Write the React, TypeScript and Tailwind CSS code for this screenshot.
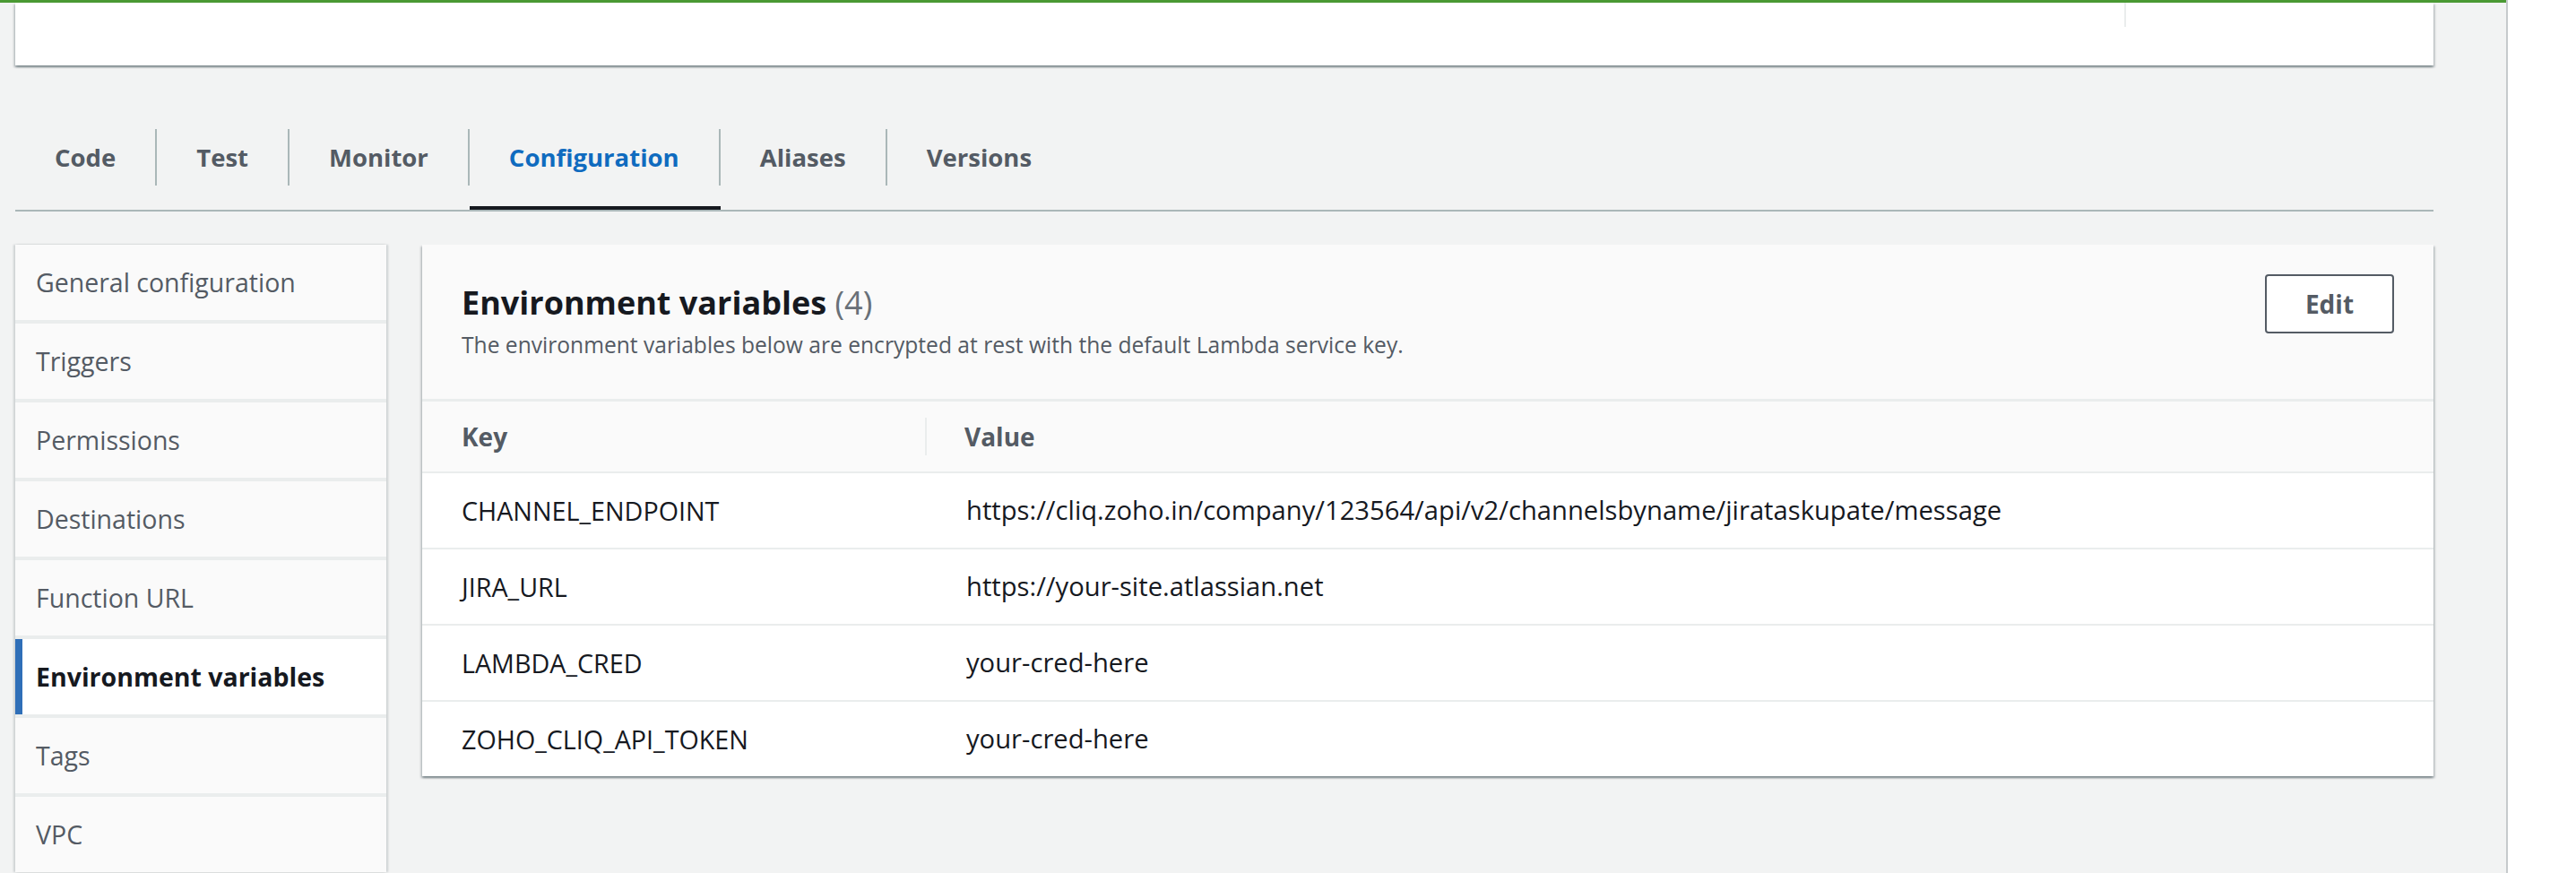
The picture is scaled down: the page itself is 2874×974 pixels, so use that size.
const tabs = ['Code', 'Test', 'Monitor', 'Configuration', 'Aliases', 'Versions'];

const navItems = [
  'General configuration',
  'Triggers',
  'Permissions',
  'Destinations',
  'Function URL',
  'Environment variables',
  'Tags',
  'VPC',
];

const envVars = [
  { key: 'CHANNEL_ENDPOINT', value: 'https://cliq.zoho.in/company/123564/api/v2/channelsbyname/jirataskupate/message' },
  { key: 'JIRA_URL', value: 'https://your-site.atlassian.net' },
  { key: 'LAMBDA_CRED', value: 'your-cred-here' },
  { key: 'ZOHO_CLIQ_API_TOKEN', value: 'your-cred-here' },
];

const cardShadow =
  'shadow-[0_2px_2px_0_rgba(0,28,36,0.3),2px_2px_2px_0_rgba(0,28,36,0.15),-2px_2px_2px_0_rgba(0,28,36,0.15)]';

export default function App() {
  const activeTab = 'Configuration';
  const activeNav = 'Environment variables';

  return (
    <div className="flex h-[974px] w-[2874px] overflow-hidden bg-white font-['Open_Sans',sans-serif]">
      <div className="flex w-[2798px] shrink-0 flex-col border-r-2 border-[#c6cacc] bg-[#f2f3f3]">
        {/* green status strip */}
        <div className="h-[3px] bg-[#4a9933]" />

        <div className="pl-[17px] pr-[81px]">
          {/* Top card (cut off) */}
          <div className={`flex h-[70px] bg-white ${cardShadow}`}>
            <div className="w-[2353px]" />
            <div className="h-[27px] w-[2px] bg-[#eaeded]" />
          </div>

          {/* Tabs */}
          <div className="mt-[71px] flex border-b-2 border-[#aab7b8]">
            {tabs.map((tab, i) => (
              <div key={tab} className="flex flex-col">
                <div
                  className={`flex h-[63px] items-center px-[44px] text-[27.5px] font-bold ${
                    i < tabs.length - 1 ? 'border-r-2 border-[#aab7b8]' : ''
                  } ${tab === activeTab ? 'text-[#0f6bbf]' : 'text-[#545b64]'}`}
                >
                  {tab}
                </div>
                <div className={`mt-[23px] h-[4px] ${tab === activeTab ? 'bg-[#16191f]' : ''}`} />
              </div>
            ))}
          </div>

          {/* Body */}
          <div className="mt-[37px] flex gap-[40px]">
            {/* Side nav */}
            <div className="flex w-[414px] shrink-0 flex-col gap-[4px] bg-[#eaeded] shadow-[2px_0_2px_0_rgba(0,28,36,0.15),-2px_0_2px_0_rgba(0,28,36,0.15)]">
              {navItems.map((item) =>
                item === activeNav ? (
                  <div
                    key={item}
                    className="flex h-[84px] shrink-0 items-center border-l-[8px] border-[#2f6fb8] bg-white pl-[15px] text-[28.5px] font-bold text-[#16191f]"
                  >
                    {item}
                  </div>
                ) : (
                  <div
                    key={item}
                    className="flex h-[84px] shrink-0 items-center bg-[#fafafa] pl-[23px] text-[28.5px] text-[#545b64]"
                  >
                    {item}
                  </div>
                )
              )}
            </div>

            {/* Environment variables card */}
            <div className={`flex-1 self-start bg-white ${cardShadow}`}>
              <div className="flex items-start justify-between border-b-[3px] border-[#eaeded] bg-[#fafafa] px-[44px] pb-[43px] pt-[33px]">
                <div className="pt-[10px]">
                  <h2 className="text-[36px] font-bold leading-[43px] text-[#16191f]">
                    Environment variables <span className="font-normal text-[#687078]">(4)</span>
                  </h2>
                  <p className="mt-[9px] text-[24.6px] leading-[34px] text-[#545b64]">
                    The environment variables below are encrypted at rest with the default Lambda service key.
                  </p>
                </div>
                <button className="h-[66px] w-[144px] rounded-[4px] border-2 border-[#545b64] bg-white text-[28px] font-bold text-[#545b64]">
                  Edit
                </button>
              </div>

              {/* table header */}
              <div className="grid h-[80px] grid-cols-[563px_1fr] items-center border-b-2 border-[#eaeded] bg-[#fafafa]">
                <div className="flex h-[42px] items-center border-r-2 border-[#eaeded] pl-[44px] text-[28px] font-bold text-[#545b64]">
                  Key
                </div>
                <div className="pl-[42px] text-[28px] font-bold text-[#545b64]">Value</div>
              </div>

              {/* rows */}
              {envVars.map((row, i) => (
                <div
                  key={row.key}
                  className={`grid h-[83px] grid-cols-[563px_1fr] items-center text-[#16191f] ${
                    i < envVars.length - 1 ? 'box-content border-b-2 border-[#eaeded]' : ''
                  }`}
                >
                  <div className="pl-[44px] text-[28.7px]">{row.key}</div>
                  <div className="pl-[44px] text-[29.2px]">{row.value}</div>
                </div>
              ))}
            </div>
          </div>
        </div>
      </div>
      <div className="flex-1 bg-white" />
    </div>
  );
}
